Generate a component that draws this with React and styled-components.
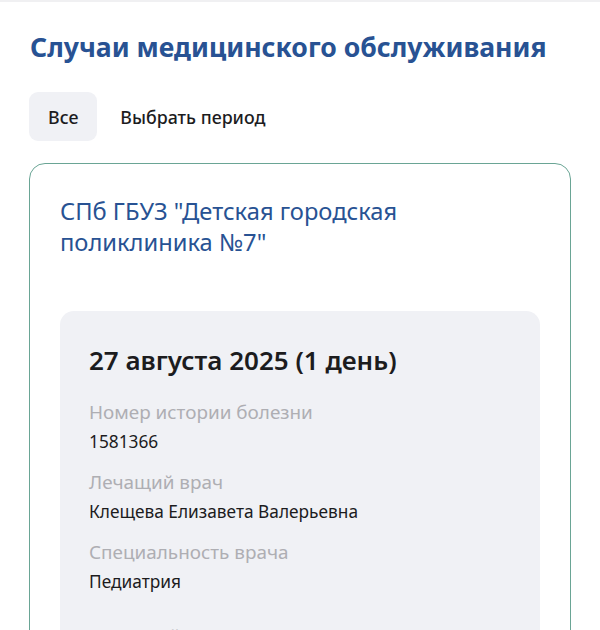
import React, { useState } from "react";
import styled, { createGlobalStyle } from "styled-components";

const Global = createGlobalStyle`
  body {
    margin: 0;
    background: #ffffff;
    font-family: "Noto Sans", "Open Sans", sans-serif;
    color: #1c1c1e;
  }
`

const Page = styled.div`
  border-top: 2px solid #f0f0f2;
  padding: 28px 29px 0 29px;
  height: 600px;
  overflow: hidden;
`

const Title = styled.h1`
  margin: 0 0 0 1px;
  font-size: 26.6px;
  line-height: 34px;
  font-weight: 700;
  color: #285293;
`

const Tabs = styled.div`
  display: flex;
  gap: 4px;
  margin-top: 28px;
`

const TabButton = styled.button`
  height: 49px;
  padding: 0 19px;
  border: none;
  border-radius: 9px;
  background: ${p => (p.active ? "#f0f1f5" : "transparent")};
  font-family: inherit;
  font-size: 17.8px;
  font-weight: 500;
  color: #1c1c1e;
  cursor: pointer;
`

const Card = styled.div`
  margin-top: 22px;
  border: 1.5px solid #6aa595;
  border-radius: 16px;
  padding: 32px 30px 0 30px;
`

const ClinicName = styled.h2`
  margin: 0;
  font-size: 23.7px;
  line-height: 31px;
  font-weight: 400;
  color: #285293;
`

const Visit = styled.div`
  margin-top: 53px;
  background: #f0f1f5;
  border-radius: 14px;
  padding: 32px 29px 40px 29px;
`

const VisitDate = styled.div`
  font-size: 26px;
  line-height: 34px;
  font-weight: 600;
  color: #1c1c1e;
  margin-bottom: 21px;
`

const Field = styled.div`
  margin-bottom: ${p => p.gap || 10}px;
`

const Label = styled.div`
  font-size: 18.9px;
  line-height: 28px;
  color: #aeaeb3;
`

const Value = styled.div`
  font-size: 17.3px;
  line-height: 32px;
  color: #1c1c1e;
`

const fields = [
  { label: "Номер истории болезни", value: "1581366" },
  { label: "Лечащий врач", value: "Клещева Елизавета Валерьевна" },
  { label: "Специальность врача", value: "Педиатрия", gap: 24 },
  { label: "Основной диагноз при выписке", value: "" },
]

export default function App() {
  let [tab, setTab] = useState(0)

  return (
    <>
      <Global />
      <Page>
        <Title>Случаи медицинского обслуживания</Title>
        <Tabs>
          <TabButton active={tab == 0} onClick={() => setTab(0)}>Все</TabButton>
          <TabButton active={tab == 1} onClick={() => setTab(1)}>Выбрать период</TabButton>
        </Tabs>
        <Card>
          <ClinicName>
            СПб ГБУЗ "Детская городская
            <br />
            поликлиника №7"
          </ClinicName>
          <Visit>
            <VisitDate>27 августа 2025 (1 день)</VisitDate>
            {fields.map((f, i) => (
              <Field key={i} gap={f.gap}>
                <Label>{f.label}</Label>
                <Value>{f.value}</Value>
              </Field>
            ))}
          </Visit>
        </Card>
      </Page>
    </>
  )
}
